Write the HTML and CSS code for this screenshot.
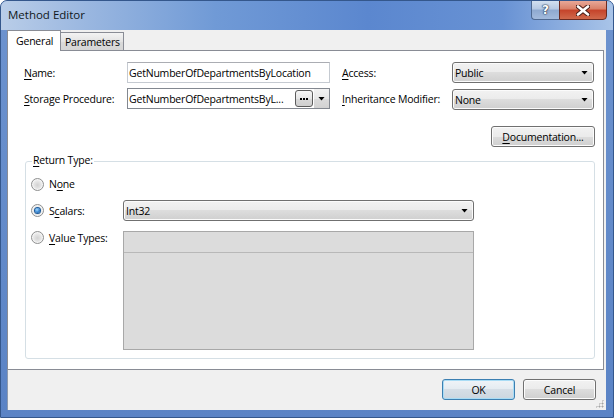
FILE: index.html
```html
<!DOCTYPE html>
<html lang="en">

<head>
    <meta charset="UTF-8">
    <meta name="viewport" content="width=device-width, initial-scale=1.0">
    <title>Method Editor</title>
    <link rel="stylesheet" href="styles.css">
</head>

<body>
    <div class="window">
        <div class="titlebar">
            <span class="title">Method Editor</span>
            <div class="caption">
                <div class="cap help">?</div>
                <div class="cap close">
                    <svg width="14" height="11" viewBox="0 0 14 11">
                        <path d="M2 1.5 L12 9.5 M12 1.5 L2 9.5" stroke="#4a1f19" stroke-width="4.6" stroke-linecap="round" />
                        <path d="M2 1.5 L12 9.5 M12 1.5 L2 9.5" stroke="#ffffff" stroke-width="2.6" stroke-linecap="round" />
                    </svg>
                </div>
            </div>
        </div>

        <div class="client">
            <div class="tabs">
                <div class="tab active">General</div>
                <div class="tab">Parameters</div>
            </div>

            <div class="panel">
                <div class="fields">
                    <label class="lbl"><u>N</u>ame:</label>
                    <div class="textbox">GetNumberOfDepartmentsByLocation</div>
                    <label class="lbl lbl-right"><u>A</u>ccess:</label>
                    <div class="combo"><span class="combo-text">Public</span><span class="arrow"></span></div>

                    <label class="lbl"><u>S</u>torage Procedure:</label>
                    <div class="picker">
                        <span class="picker-text">GetNumberOfDepartmentsByL...</span>
                        <span class="dots-btn"><i></i><i></i><i></i></span>
                        <span class="drop-btn"><span class="arrow"></span></span>
                    </div>
                    <label class="lbl lbl-right"><u>I</u>nheritance Modifier:</label>
                    <div class="combo combo-low"><span class="combo-text">None</span><span class="arrow"></span></div>
                </div>

                <div class="doc-row">
                    <button class="btn doc-btn"><u>D</u>ocumentation...</button>
                </div>

                <div class="group">
                    <span class="legend"><u>R</u>eturn Type:</span>
                    <div class="options">
                        <div class="radio-row"><span class="radio"></span><span>N<u>o</u>ne</span></div>
                        <div></div>

                        <div class="radio-row"><span class="radio checked"></span><span>S<u>c</u>alars:</span></div>
                        <div class="combo"><span class="combo-text">Int32</span><span class="arrow"></span></div>

                        <div class="radio-row row-values"><span class="radio"></span><span><u>V</u>alue Types:</span></div>
                        <div class="list">
                            <div class="list-head"></div>
                        </div>
                    </div>
                </div>
            </div>

            <div class="footer">
                <button class="btn ok">OK</button>
                <button class="btn">Cancel</button>
                <span class="grip"></span>
            </div>
        </div>
    </div>
</body>

</html>
```

FILE: styles.css
```css
body {
    margin: 0;
    font-family: "Open Sans", "Noto Sans", sans-serif;
    font-size: 10.5px;
    letter-spacing: -0.2px;
    color: #000;
}

u {
    text-decoration-thickness: 1px;
    text-underline-offset: 2px;
}

.window {
    width: 614px;
    height: 418px;
    box-sizing: border-box;
    border: 1px solid #34578c;
    border-radius: 7px 7px 0 0;
    background: linear-gradient(to bottom, #6d93cf, #5a83c5);
    display: flex;
    flex-direction: column;
    overflow: hidden;
}

.titlebar {
    height: 29px;
    display: flex;
    justify-content: space-between;
    background: linear-gradient(to right, #b9cde8 0%, #9ab7e0 14%, #709ad6 35%, #5b87cf 60%, #6892d4 82%, #a9c4e8 100%);
}

.title {
    margin: 6px 0 0 7px;
    font-size: 11.5px;
    letter-spacing: 0;
    color: #101820;
}

.caption {
    display: flex;
    margin-right: 6px;
    margin-top: -1px;
    height: 20px;
}

.cap {
    box-sizing: border-box;
    height: 20px;
    display: flex;
    align-items: center;
    justify-content: center;
}

.help {
    width: 28px;
    border: 1px solid #4e6991;
    border-right: none;
    border-radius: 0 0 0 4px;
    background: linear-gradient(to bottom, #d3e0f0 0%, #b6c9e3 45%, #8ea9d0 50%, #a3bbdd 100%);
    color: #fff;
    font-family: "DejaVu Sans", sans-serif;
    font-weight: bold;
    font-size: 12px;
    text-shadow: 0 0 1px #24364f, 0 0 1px #24364f, 0 0 2px #24364f;
}

.close {
    width: 48px;
    border: 1px solid #6b2a21;
    border-radius: 0 0 4px 0;
    background: linear-gradient(to bottom, #e8a898 0%, #d98068 45%, #c5432a 50%, #d0694c 100%);
}

.client {
    margin-left: 6px;
    width: 599px;
    height: 380px;
    background: #f0f0f0;
    box-shadow: inset 1px 0 0 #8d9aae;
    position: relative;
    display: flex;
    flex-direction: column;
}

.tabs {
    display: flex;
    align-items: flex-end;
    height: 20px;
    position: relative;
    z-index: 1;
}

.tab {
    box-sizing: border-box;
    height: 18px;
    border: 1px solid #898c95;
    border-bottom: none;
    border-left: none;
    background: linear-gradient(to bottom, #f3f3f3, #e3e3e3 50%, #dadada 50%, #d6d6d6);
    padding: 2px 0 0 4px;
    width: 63px;
}

.tab.active {
    height: 21px;
    width: 54px;
    margin-bottom: -1px;
    border-left: 1px solid #898c95;
    border-right: 1px solid #898c95;
    background: #fff;
    padding: 3px 0 0 8px;
}

.panel {
    box-sizing: border-box;
    width: 597px;
    height: 320px;
    border: 1px solid #898c95;
    background: #fff;
    padding: 11px 8px 0 16px;
}

.fields {
    display: grid;
    grid-template-columns: 103px 203px 122px 142px;
    grid-template-rows: 21px 21px;
    row-gap: 5px;
    align-items: center;
}

.lbl-right {
    padding-left: 12px;
}

.textbox {
    box-sizing: border-box;
    height: 21px;
    border: 1px solid #c5cad1;
    border-top-color: #abadb3;
    padding: 3px 0 0 1px;
}

.picker {
    box-sizing: border-box;
    height: 21px;
    border: 1px solid #838890;
    display: flex;
    align-items: center;
    padding-left: 1px;
}

.picker-text {
    flex: 1;
}

.dots-btn {
    box-sizing: border-box;
    width: 18px;
    height: 17px;
    border: 1px solid #5c5c5c;
    border-radius: 3px;
    background: linear-gradient(to bottom, #f6f6f6, #e6e6e6 50%, #d9d9d9 50%, #cfcfcf);
    display: flex;
    align-items: center;
    justify-content: center;
    gap: 1px;
    margin-right: 1px;
}

.dots-btn i {
    width: 2px;
    height: 2px;
    background: #000;
}

.drop-btn {
    width: 15px;
    height: 19px;
    display: flex;
    align-items: center;
    justify-content: center;
    background: linear-gradient(to bottom, #f2f2f2, #e8e8e8 50%, #dcdcdc 50%, #d2d2d2);
}

.combo {
    box-sizing: border-box;
    height: 21px;
    border: 1px solid #707070;
    border-radius: 3px;
    background: linear-gradient(to bottom, #f2f2f2 0%, #ebebeb 50%, #dddddd 50%, #cfcfcf 100%);
    box-shadow: inset 0 0 0 1px #fbfbfb;
    display: flex;
    align-items: center;
    padding: 0 5px 0 2px;
}

.combo-low {
    margin-top: 2px;
}

.combo-text {
    flex: 1;
}

.arrow {
    width: 7px;
    height: 4px;
    background: #000;
    clip-path: polygon(0 0, 100% 0, 50% 100%);
}

.doc-row {
    display: flex;
    justify-content: flex-end;
    margin-top: 17px;
}

.btn {
    box-sizing: border-box;
    height: 21px;
    border: 1px solid #707070;
    border-radius: 3px;
    background: linear-gradient(to bottom, #f2f2f2 0%, #ebebeb 50%, #dddddd 50%, #cfcfcf 100%);
    box-shadow: inset 0 0 0 1px #fcfcfc;
    font-family: inherit;
    font-size: 10.5px;
    letter-spacing: -0.2px;
    color: #000;
    padding: 0;
}

.doc-btn {
    width: 104px;
}

.group {
    position: relative;
    box-sizing: border-box;
    width: 570px;
    height: 198px;
    margin: 14px 0 0 1px;
    border: 1px solid #d5dfe5;
    border-radius: 3px;
    padding: 12px 0 0 5px;
}

.legend {
    position: absolute;
    top: -9px;
    left: 6px;
    padding: 0 1px;
    background: #fff;
}

.options {
    display: grid;
    grid-template-columns: 92px 351px;
    grid-template-rows: 20px 21px 119px;
    row-gap: 6px;
}

.radio-row {
    display: flex;
    align-items: center;
    gap: 5px;
}

.radio-row.row-values {
    align-self: start;
    height: 13px;
    margin-top: 4px;
}

.list {
    box-sizing: border-box;
    height: 119px;
    margin-top: 4px;
    border: 1px solid #a8a8a8;
    background: #dcdcdc;
}

.list-head {
    height: 20px;
    border-bottom: 1px solid #b8b8b8;
}

.radio {
    box-sizing: border-box;
    width: 13px;
    height: 13px;
    border-radius: 50%;
    border: 1px solid #8e8f8f;
    background: radial-gradient(circle at 50% 55%, #d2d2d2 0%, #e6e6e6 45%, #f7f7f7 80%);
    box-shadow: inset 0 0 0 1px #f4f4f4;
    display: flex;
    align-items: center;
    justify-content: center;
}

.radio.checked::after {
    content: "";
    width: 5px;
    height: 5px;
    border-radius: 50%;
    background: radial-gradient(circle at 40% 35%, #a6dcff 0%, #3c8ad6 50%, #0f4f96 100%);
    box-shadow: 0 0 0 1px #1c5a9a;
}

.footer {
    flex: 1;
    display: flex;
    justify-content: flex-end;
    align-items: flex-start;
    gap: 8px;
    padding: 9px 10px 0 0;
}

.footer .btn {
    width: 73px;
}

.btn.ok {
    border-color: #3c7fb1;
    background: linear-gradient(to bottom, #f0f4f8 0%, #e4ebf1 50%, #d6dee6 50%, #ccd6df 100%);
    box-shadow: inset 0 0 0 1px #a9dcf5;
}

.grip {
    position: absolute;
    right: 2px;
    bottom: 2px;
    width: 9px;
    height: 9px;
    background-image: radial-gradient(circle, #a3a3a3 0.8px, transparent 1.2px);
    background-size: 3px 3px;
    clip-path: polygon(100% 0, 100% 100%, 0 100%);
}
```
